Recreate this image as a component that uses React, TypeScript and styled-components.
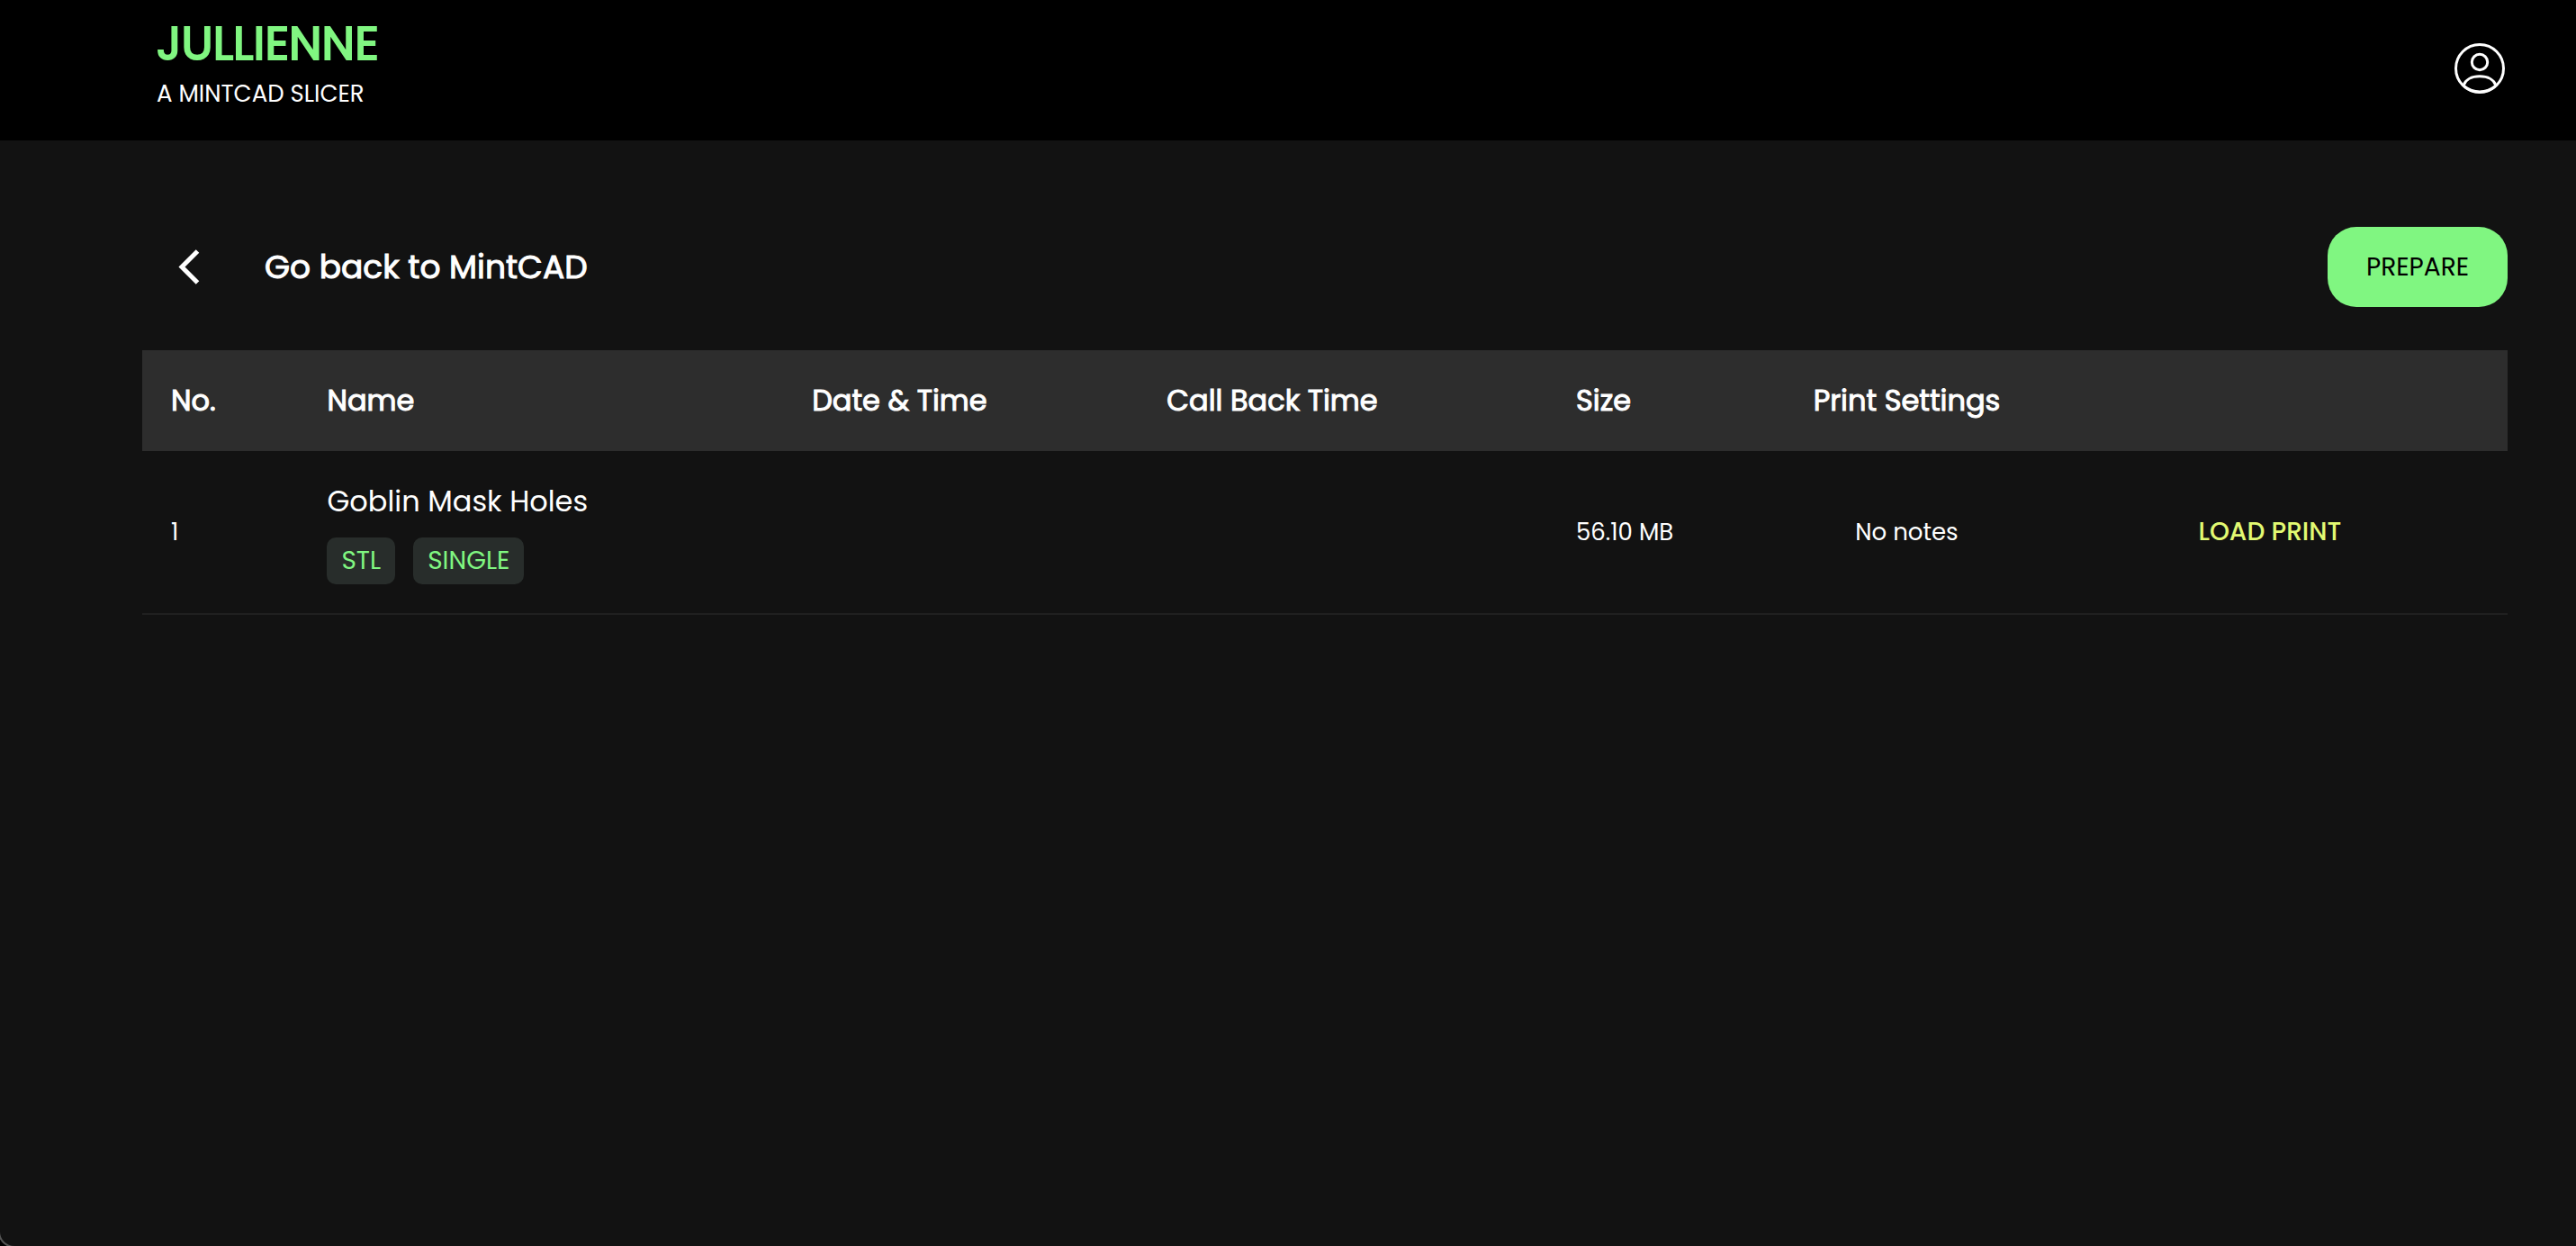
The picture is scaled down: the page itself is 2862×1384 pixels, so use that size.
import React from "react";
import styled, { createGlobalStyle, css } from "styled-components";

const colors = {
  page: "#121212",
  bar: "#000000",
  head: "#2d2d2d",
  line: "#202020",
  mint: "#80f681",
  lime: "#e2fa72",
  badge: "#282d2b",
  text: "#ffffff",
};

const heavy = css<{ $stroke?: number }>`
  font-weight: 400;
  -webkit-text-stroke: ${({ $stroke = 1 }) => $stroke}px currentColor;
`;

const GlobalStyle = createGlobalStyle`
  *, *::before, *::after { box-sizing: border-box; }
  body {
    margin: 0;
    background: ${colors.bar};
    color: ${colors.text};
    font-family: Poppins, Inter, "Open Sans", sans-serif;
    font-size: 26px;
    line-height: 40px;
  }
  button { font-family: inherit; cursor: pointer; }
`;

const Page = styled.div`
  display: flex;
  flex-direction: column;
  min-height: 100vh;
  background: ${colors.page};
  border-bottom-left-radius: 16px;
  box-shadow: 0 0 0 2px #555555;
`;

const TopBar = styled.header`
  display: flex;
  align-items: center;
  justify-content: space-between;
  height: 156px;
  padding: 0 78px 4px 174px;
  background: ${colors.bar};
`;

const Brand = styled.div`
  display: flex;
  flex-direction: column;
  padding-bottom: 16px;
`;

const BrandName = styled.h1<{ $stroke?: number }>`
  margin: 0;
  color: ${colors.mint};
  font-size: 52px;
  line-height: 72px;
  ${heavy}
`;

const Tagline = styled.p`
  margin: 0;
`;

const IconButton = styled.button`
  display: flex;
  padding: 0;
  border: 0;
  background: none;
  color: inherit;
`;

const Content = styled.main`
  display: flex;
  flex-direction: column;
  gap: 48px;
  padding: 96px 76px 48px 158px;
`;

const Toolbar = styled.div`
  display: flex;
  align-items: center;
  justify-content: space-between;
`;

const BackLink = styled.a`
  display: flex;
  align-items: center;
  gap: 72px;
  padding-left: 40px;
  color: inherit;
  font-size: 36px;
  line-height: 56px;
  text-decoration: none;
  ${heavy}
`;

const PrepareButton = styled.button`
  min-width: 200px;
  padding: 16px 32px;
  border: 0;
  border-radius: 32px;
  background: ${colors.mint};
  color: ${colors.bar};
  font-size: 28px;
  line-height: 57px;
`;

const Table = styled.table`
  width: 100%;
  border-collapse: collapse;
  table-layout: fixed;
`;

const Column = styled.col<{ $width: string }>`
  width: ${({ $width }) => $width};
`;

const HeadCell = styled.th<{ $center?: boolean }>`
  height: 112px;
  padding: 0 0 0 ${({ $center }) => ($center ? 0 : 32)}px;
  background: ${colors.head};
  font-size: 32px;
  text-align: ${({ $center }) => ($center ? "center" : "left")};
  white-space: nowrap;
  ${heavy}
`;

const Cell = styled.td<{ $center?: boolean }>`
  padding: 32px 0 32px ${({ $center }) => ($center ? 0 : 32)}px;
  border-bottom: 2px solid ${colors.line};
  text-align: ${({ $center }) => ($center ? "center" : "left")};
`;

const FileName = styled.div`
  font-size: 32px;
  line-height: 48px;
`;

const Badges = styled.div`
  display: flex;
  gap: 20px;
  margin-top: 16px;
`;

const Badge = styled.span`
  padding: 0 16px;
  border-radius: 10px;
  background: ${colors.badge};
  color: ${colors.mint};
  font-size: 28px;
  line-height: 52px;
`;

const LoadButton = styled.button`
  padding: 0;
  border: 0;
  background: none;
  color: ${colors.lime};
  font-size: 28px;
  font-weight: 500;
`;

const UserIcon = () => (
  <svg width="58" height="58" viewBox="0 0 58 58" fill="none" stroke="currentColor" strokeWidth="3" aria-hidden="true">
    <circle cx="29" cy="29" r="26.5" />
    <circle cx="29" cy="22" r="8.7" />
    <path d="M11 48C13 41.500 20 37.800 29 37.800S45 41.500 47 48" />
    <path d="M12 49C22 57 36 57 46 49" />
  </svg>
);

const BackIcon = () => (
  <svg width="24" height="40" viewBox="0 0 24 40" fill="none" stroke="currentColor" strokeWidth="5" aria-hidden="true">
    <path d="M21.500 2L4 19.500L21.500 37" />
  </svg>
);

const columns = [
  { title: "No.", width: "6.6%" },
  { title: "Name", width: "20.5%" },
  { title: "Date & Time", width: "15%" },
  { title: "Call Back Time", width: "17.3%" },
  { title: "Size", width: "9.9%" },
  { title: "Print Settings", width: "10.6%", center: true },
  { title: "", width: "20.1%" },
];

const prints = [
  { name: "Goblin Mask Holes", tags: ["STL", "SINGLE"], date: "", callback: "", size: "56.10 MB", notes: "No notes" },
];

export default function App() {
  return (
    <>
      <GlobalStyle />
      <Page>
        <TopBar>
          <Brand>
            <BrandName $stroke={2}>JULLIENNE</BrandName>
            <Tagline>A MINTCAD SLICER</Tagline>
          </Brand>
          <IconButton type="button" aria-label="Account">
            <UserIcon />
          </IconButton>
        </TopBar>
        <Content>
          <Toolbar>
            <BackLink href="#">
              <BackIcon />
              Go back to MintCAD
            </BackLink>
            <PrepareButton type="button">PREPARE</PrepareButton>
          </Toolbar>
          <Table>
            <colgroup>
              {columns.map((c) => (
                <Column key={c.title} $width={c.width} />
              ))}
            </colgroup>
            <thead>
              <tr>
                {columns.map((c) => (
                  <HeadCell key={c.title} scope="col" $center={c.center}>
                    {c.title}
                  </HeadCell>
                ))}
              </tr>
            </thead>
            <tbody>
              {prints.map((p, i) => (
                <tr key={p.name}>
                  <Cell>{i + 1}</Cell>
                  <Cell>
                    <FileName>{p.name}</FileName>
                    <Badges>
                      {p.tags.map((t) => (
                        <Badge key={t}>{t}</Badge>
                      ))}
                    </Badges>
                  </Cell>
                  <Cell>{p.date}</Cell>
                  <Cell>{p.callback}</Cell>
                  <Cell>{p.size}</Cell>
                  <Cell $center>{p.notes}</Cell>
                  <Cell $center>
                    <LoadButton type="button">LOAD PRINT</LoadButton>
                  </Cell>
                </tr>
              ))}
            </tbody>
          </Table>
        </Content>
      </Page>
    </>
  );
}
